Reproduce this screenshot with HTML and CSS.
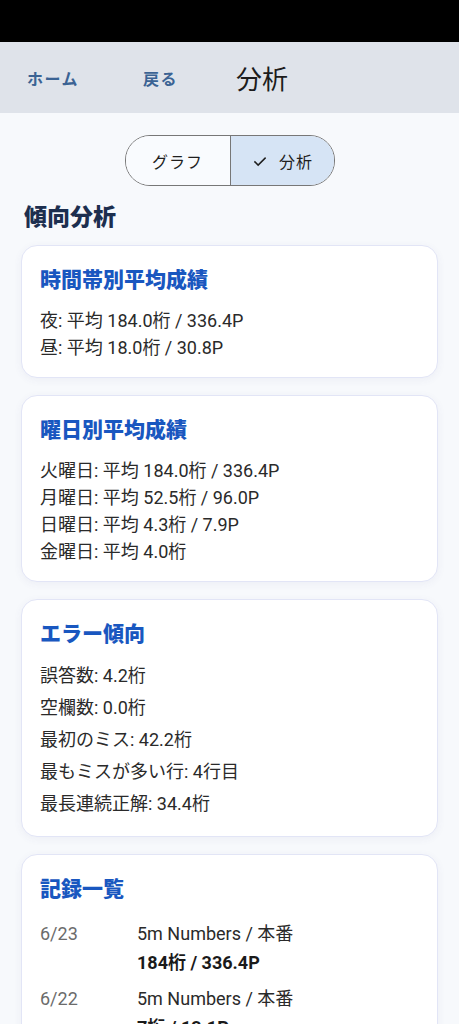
FILE: index.html
```html
<!DOCTYPE html>
<html lang="ja">
<head>
<meta charset="UTF-8" />
<meta name="viewport" content="width=device-width, initial-scale=1" />
<title>分析</title>
<link rel="stylesheet" href="styles.css">
</head>
<body>
  <div class="status-bar"></div>

  <header class="app-bar">
    <a class="nav-link home">ホーム</a>
    <a class="nav-link back">戻る</a>
    <h1 class="app-title">分析</h1>
  </header>

  <main class="content">
    <div class="segmented" role="tablist">
      <button class="segment" role="tab">グラフ</button>
      <button class="segment selected" role="tab" aria-selected="true">
        <svg class="check" viewBox="0 0 24 24"><path d="M4.5 12.5l5 5L19.5 7.5"/></svg>
        分析
      </button>
    </div>

    <h2 class="section-title">傾向分析</h2>

    <section class="card">
      <h3 class="card-title">時間帯別平均成績</h3>
      <ul class="lines">
        <li>夜: 平均 184.0桁 / 336.4P</li>
        <li>昼: 平均 18.0桁 / 30.8P</li>
      </ul>
    </section>

    <section class="card">
      <h3 class="card-title">曜日別平均成績</h3>
      <ul class="lines">
        <li>火曜日: 平均 184.0桁 / 336.4P</li>
        <li>月曜日: 平均 52.5桁 / 96.0P</li>
        <li>日曜日: 平均 4.3桁 / 7.9P</li>
        <li>金曜日: 平均 4.0桁</li>
      </ul>
    </section>

    <section class="card">
      <h3 class="card-title">エラー傾向</h3>
      <ul class="lines spaced">
        <li>誤答数: 4.2桁</li>
        <li>空欄数: 0.0桁</li>
        <li>最初のミス: 42.2桁</li>
        <li>最もミスが多い行: 4行目</li>
        <li>最長連続正解: 34.4桁</li>
      </ul>
    </section>

    <section class="card">
      <h3 class="card-title">記録一覧</h3>
      <div class="records">
        <div class="record">
          <span class="date">6/23</span>
          <div class="detail">
            <div>5m Numbers / 本番</div>
            <div class="score">184桁 / 336.4P</div>
          </div>
        </div>
        <div class="record">
          <span class="date">6/22</span>
          <div class="detail">
            <div>5m Numbers / 本番</div>
            <div class="score">7桁 / 13.1P</div>
          </div>
        </div>
      </div>
    </section>
  </main>
</body>
</html>
```

FILE: styles.css
```css
body {
  margin: 0;
  background: #f7f9fc;
  font-family: Roboto, "Noto Sans CJK JP", sans-serif;
  color: #222;
}

.status-bar {
  height: 42px;
  background: #000;
}

.app-bar {
  height: 71px;
  background: #dfe3ea;
  display: flex;
  align-items: center;
  padding-left: 27px;
}

.nav-link {
  color: #3b6394;
  font-size: 16px;
  font-weight: bold;
  letter-spacing: 1.5px;
}

.home {
  width: 116px;
}

.back {
  width: 93px;
}

.app-title {
  margin: 0;
  font-size: 26px;
  font-weight: normal;
  color: #1c1c1c;
}

.content {
  display: flex;
  flex-direction: column;
  gap: 17px;
  padding: 22px 21px 40px;
}

.segmented {
  align-self: center;
  display: flex;
  height: 49px;
  border: 1px solid #777;
  border-radius: 25px;
  overflow: hidden;
}

.segment {
  width: 104px;
  border: 0;
  background: #f9fbfe;
  font-family: inherit;
  font-size: 16px;
  color: #1f1f1f;
  letter-spacing: 1px;
  display: flex;
  align-items: center;
  justify-content: center;
  gap: 10px;
}

.segment + .segment {
  border-left: 1px solid #777;
}

.segment.selected {
  background: #d6e4f5;
}

.check {
  width: 18px;
  height: 18px;
  fill: none;
  stroke: #1f1f1f;
  stroke-width: 2;
}

.section-title {
  margin: 0 0 -5px 3px;
  font-size: 23px;
  font-weight: 900;
  color: #1d2f4f;
  line-height: 30px;
}

.card {
  background: #fff;
  border: 1px solid #e2e5f6;
  border-radius: 16px;
  box-shadow: 0 2px 8px rgba(60, 70, 140, 0.06);
  padding: 21px 18px 16px;
}

.card-title {
  margin: 0;
  font-size: 21px;
  font-weight: 900;
  color: #1957c0;
  line-height: 26px;
}

.lines {
  list-style: none;
  margin: 14px 0 0;
  padding: 0;
  font-size: 18px;
  line-height: 27px;
  color: #2a2a2a;
}

.lines.spaced {
  margin-top: 13px;
  line-height: 32px;
}

.records {
  display: flex;
  flex-direction: column;
  gap: 7px;
  margin-top: 17px;
}

.record {
  display: flex;
  font-size: 18px;
  line-height: 29px;
  color: #2a2a2a;
}

.date {
  width: 97px;
  color: #6b6b6b;
}

.score {
  font-weight: bold;
  color: #1a1a1a;
}
```
